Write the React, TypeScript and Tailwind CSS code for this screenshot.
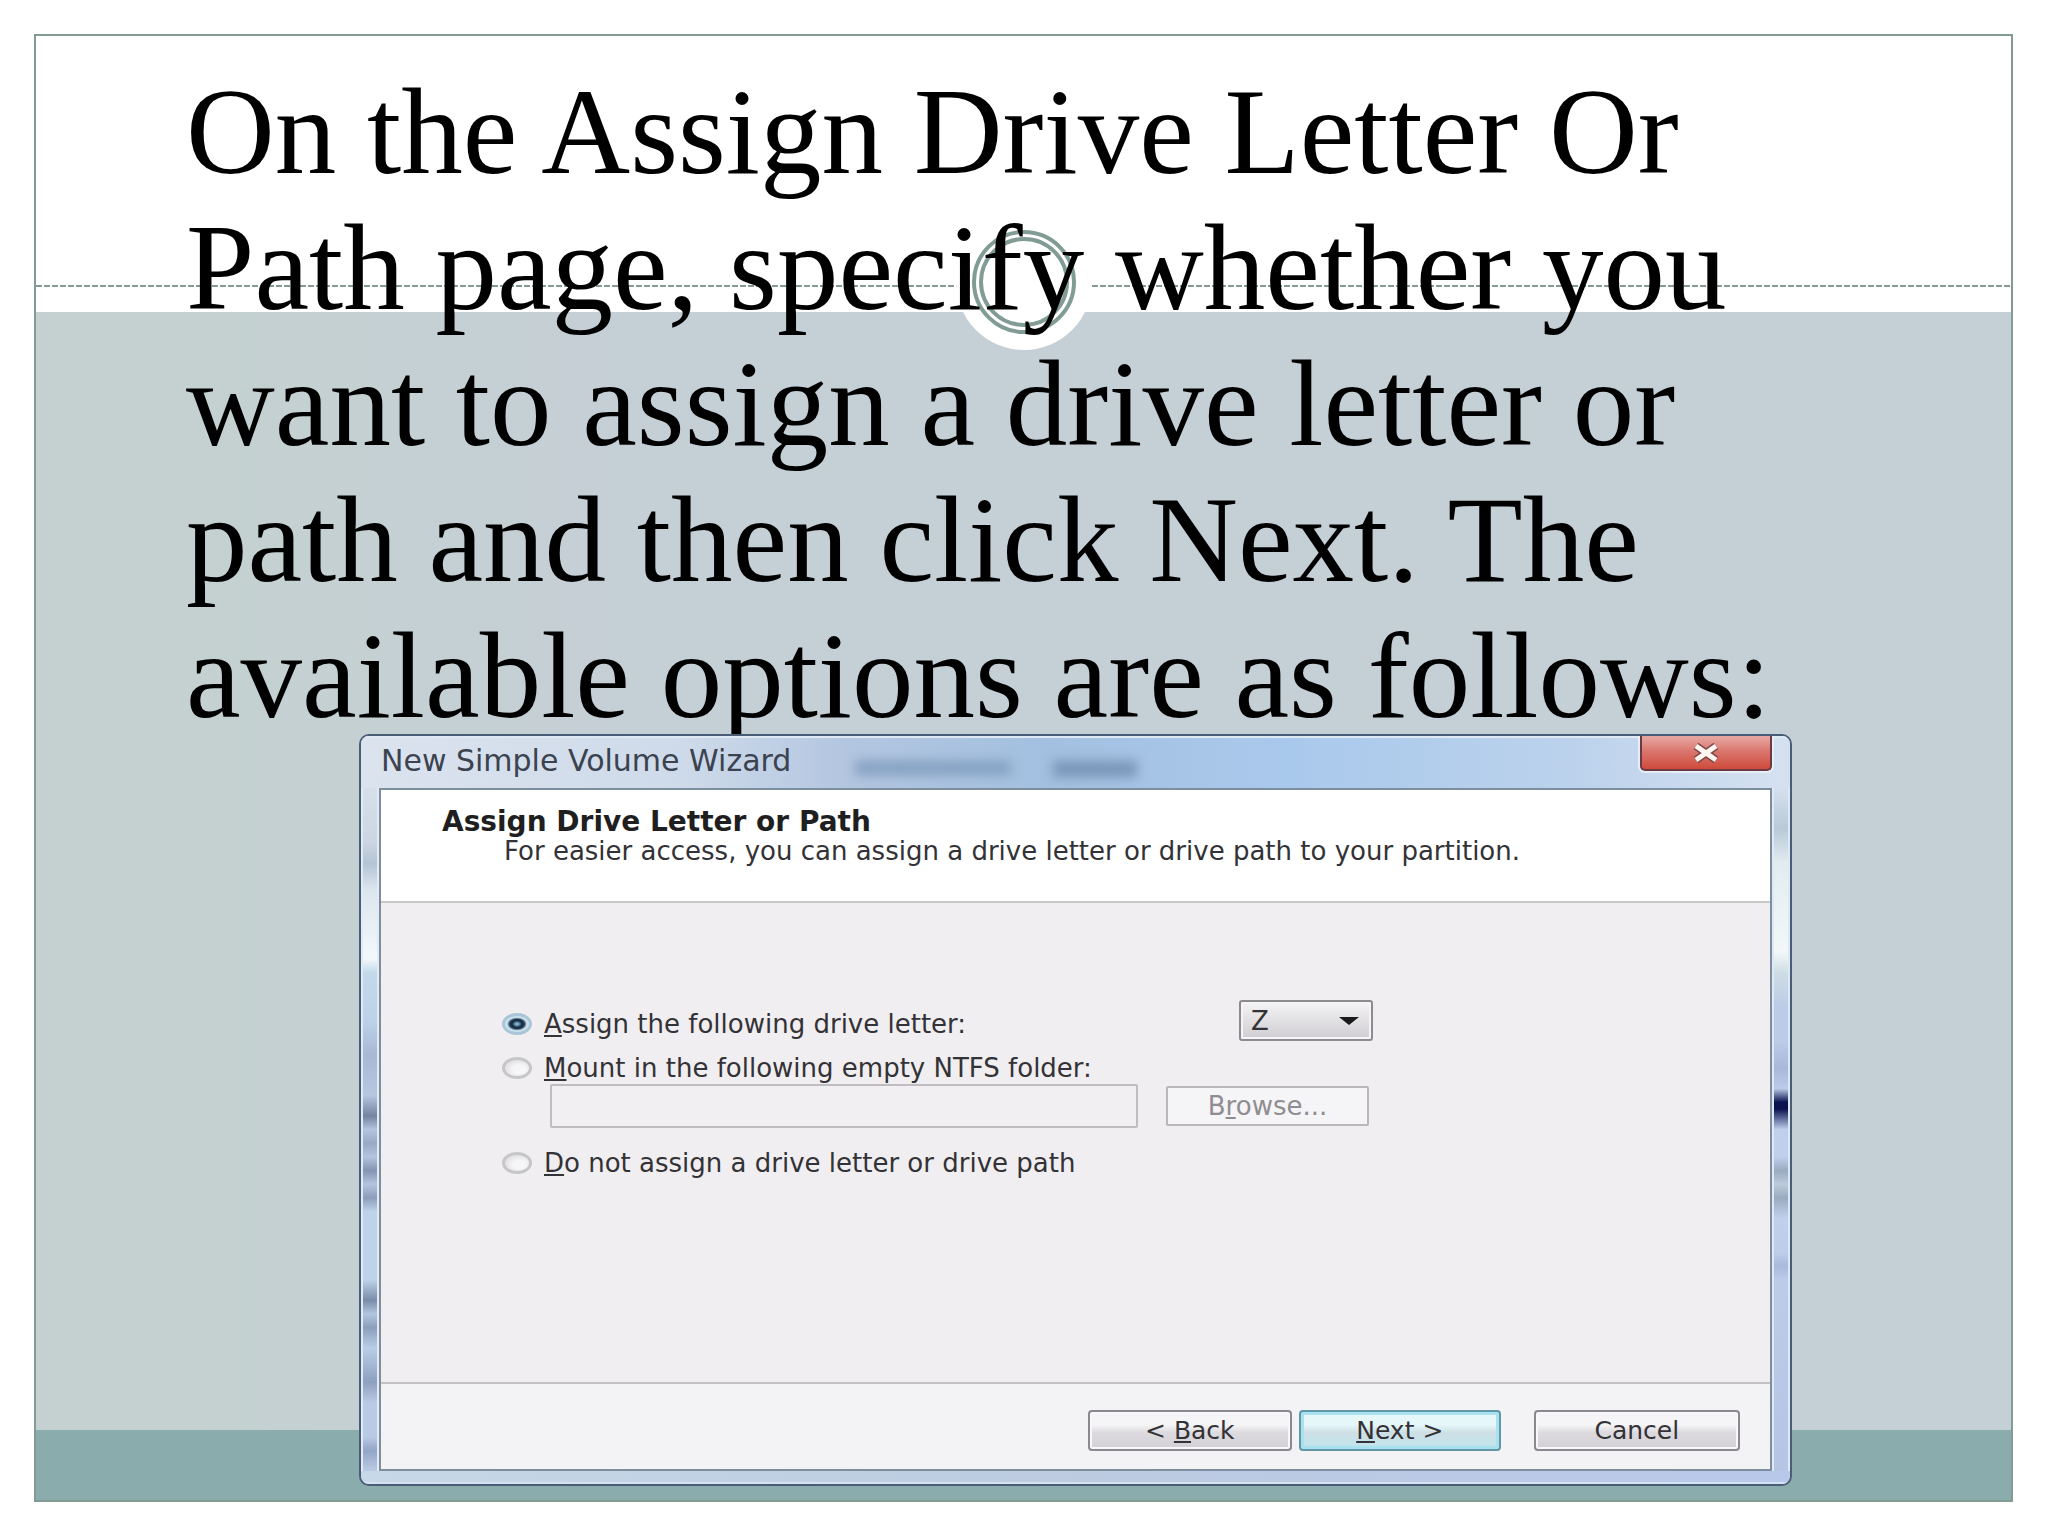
import React from "react";

const headingLines = [
  "On the Assign Drive Letter Or",
  "Path page, specify whether you",
  "want to assign a drive letter or",
  "path and then click Next. The",
  "available options are as follows:",
];

const radioClass =
  "h-[22px] w-[30px] shrink-0 appearance-none rounded-[50%] border-[3px] border-[#c6c5c8] bg-[radial-gradient(ellipse_at_60%_60%,#f6f5f7_30%,#d3d2d5_100%)] checked:border-[#a9c6d8] checked:bg-[radial-gradient(ellipse_at_center,#9fd0e4_0%,#5d8fa8_14%,#16283f_30%,#27405a_44%,#c5dfeb_58%,#dcebf2_100%)]";

const plainButton =
  "h-[41px] rounded-[4px] border-2 border-[#8b8890] bg-linear-to-b from-[#f5f4f6] from-35% via-[#dddbdf] via-55% to-[#d2d0d4] shadow-[inset_0_0_0_2px_#f8f7f9]";

function SlideBackground() {
  return (
    <div className="col-start-1 row-start-1 flex flex-col" aria-hidden="true">
      <div className="relative h-[276px] shrink-0 bg-white">
        <svg className="absolute bottom-[25px] left-0 h-[2px] w-full">
          <line x1="0" y1="1" x2="100%" y2="1" stroke="#84998f" strokeWidth="2" strokeDasharray="6 2" />
        </svg>
        <svg
          className="absolute -bottom-[38px] left-1/2 h-[136px] w-[136px] -translate-x-1/2"
          viewBox="0 0 136 136"
        >
          <circle cx="68" cy="68" r="68" fill="#fff" />
          <circle cx="68" cy="68" r="50" fill="none" stroke="#809c95" strokeWidth="4" />
          <circle cx="68" cy="68" r="43" fill="none" stroke="#809c95" strokeWidth="4" />
        </svg>
      </div>
      <div className="flex-1 bg-linear-to-r from-[#c4d1d0] from-8% via-[#c5cfd6] via-30% to-[#c5cfd6]" />
      <div className="h-[70px] shrink-0 bg-[#8aacac]" />
    </div>
  );
}

function TitleBar() {
  return (
    <div className="relative flex h-[52px] items-start justify-between bg-[linear-gradient(90deg,#dbe3ee_0%,#cfdbea_22%,#b3c6e0_34%,#a3c0e0_48%,#a9c9ec_65%,#bcd2ec_85%,#d5e1f0_100%)] pr-[18px] pl-[20px] shadow-[inset_0_2px_0_#dfe9f3]">
      <div className="flex items-center">
        <h2 className="text-[30px] leading-[50px] whitespace-nowrap text-[#3b4350]">New Simple Volume Wizard</h2>
        <div className="ml-[64px] flex gap-[42px] pt-[16px] blur-[6px]" aria-hidden="true">
          <span className="h-[14px] w-[156px] bg-[#839fc0]" />
          <span className="h-[16px] w-[84px] bg-[#7893b6]" />
        </div>
      </div>
      <button
        type="button"
        aria-label="Close"
        className="flex h-[35px] w-[132px] items-center justify-center rounded-b-[5px] border-2 border-t-0 border-[#6b3a44] bg-linear-to-b from-[#e6a49f] from-5% via-[#d9746c] via-48% to-[#cf4a3a] shadow-[0_0_0_2px_#e8eef6]"
      >
        <svg width="32" height="20" viewBox="0 0 32 20">
          <path d="M6 3 L26 17 M26 3 L6 17" stroke="#7b4a4c" strokeWidth="8" />
          <path d="M6 3 L26 17 M26 3 L6 17" stroke="#fff5f0" strokeWidth="5" />
        </svg>
      </button>
    </div>
  );
}

function WizardBody() {
  return (
    <fieldset
      aria-label="Drive letter options"
      className="flex h-[479px] flex-col bg-[#f0eef1] pt-[97px] pl-[121px] text-[26px]"
    >
      <div className="flex h-[48px] items-center">
        <input id="letter" type="radio" name="mode" defaultChecked className={radioClass} />
        <label htmlFor="letter" className="w-[707px] pl-[12px]">
          <u>A</u>ssign the following drive letter:
        </label>
        <div className="relative self-start">
          <select
            aria-label="Drive letter"
            className="block h-[41px] w-[134px] appearance-none rounded-[3px] border-2 border-[#8d8b90] bg-linear-to-b from-[#f4f3f5] to-[#cfcdd1] pl-[10px] shadow-[inset_0_0_0_2px_#f5f4f6]"
          >
            <option>Z</option>
          </select>
          <svg className="pointer-events-none absolute top-[17px] right-[14px]" width="20" height="8" viewBox="0 0 20 8">
            <path d="M0 0H20L10 8Z" fill="#1a1a1c" />
          </svg>
        </div>
      </div>
      <div className="flex h-[36px] items-center pt-[4px]">
        <input id="mount" type="radio" name="mode" className={radioClass} />
        <label htmlFor="mount" className="pl-[12px]">
          <u>M</u>ount in the following empty NTFS folder:
        </label>
      </div>
      <div className="flex items-center pl-[48px]">
        <input
          type="text"
          disabled
          aria-label="NTFS folder"
          className="h-[44px] w-[588px] rounded-[2px] border-2 border-[#bfbdc1] bg-[#f1eff2]"
        />
        <button
          type="button"
          disabled
          className="ml-[28px] h-[40px] w-[203px] rounded-[2px] border-2 border-[#b9b7bb] bg-[#f5f4f6] text-[#8f8d92]"
        >
          B<u>r</u>owse...
        </button>
      </div>
      <div className="mt-[19px] flex h-[32px] items-center">
        <input id="none" type="radio" name="mode" className={radioClass} />
        <label htmlFor="none" className="pl-[12px]">
          <u>D</u>o not assign a drive letter or drive path
        </label>
      </div>
    </fieldset>
  );
}

function Wizard() {
  return (
    <section className="relative -mt-[10px] mr-[11.1%] ml-[323px] overflow-hidden rounded-[10px] border-2 border-[#4a5d76] bg-[#bccbe3] font-['DejaVu_Sans',sans-serif] text-[25px] leading-[28px] text-[#333236]">
      <TitleBar />
      <div className="flex">
        <div className="w-[18px] shrink-0 border-x-2 border-[#e2ebf5] bg-[linear-gradient(180deg,#d5e0ea_0%,#cbd6e2_8%,#b4c4d4_11%,#dce6ee_15%,#f3f8fb_25%,#c3d9ea_27%,#bdd2e8_34%,#a8b8d4_39%,#b6c8e0_45%,#72849f_48%,#b3c4de_50%,#98a9c6_52%,#b3c4de_54%,#8495b2_56%,#b3c4de_58%,#8c9dba_60%,#bed2e9_62%,#bed2e9_72%,#7a8ca8_75%,#b3c6df_77%,#8c9eba_79%,#bacde6_82%,#8ea0c0_87%,#b9cae4_90%,#b9cae4_95%,#93a5c8_97%,#bccbe3_100%)]" />
        <div className="min-w-0 flex-1 border-2 border-[#7d8f9d]">
          <header className="h-[113px] border-b-2 border-[#c9c7ca] bg-white pt-[17px] pl-[61px]">
            <h3 className="text-[28px] leading-[30px] font-bold text-[#1f1e21]">Assign Drive Letter or Path</h3>
            <p className="pl-[62px] text-[26px] leading-[28px] whitespace-nowrap">
              For easier access, you can assign a drive letter or drive path to your partition.
            </p>
          </header>
          <WizardBody />
          <footer className="flex h-[87px] items-center justify-end border-t-2 border-[#c4c2c6] bg-[#f3f2f4] pt-[8px] pr-[30px]">
            <button type="button" className={plainButton + " w-[204px]"}>
              &lt; <u>B</u>ack
            </button>
            <button
              type="button"
              className="ml-[7px] h-[41px] w-[202px] rounded-[4px] border-2 border-[#5f97a6] bg-linear-to-b from-[#e6f7fa] from-35% via-[#cfe0e6] via-55% to-[#bfe4ec] shadow-[inset_0_0_0_3px_#a9e1ee]"
            >
              <u>N</u>ext &gt;
            </button>
            <button type="button" className={plainButton + " ml-[33px] w-[206px]"}>
              Cancel
            </button>
          </footer>
        </div>
        <div className="w-[18px] shrink-0 border-x-2 border-[#dfe8f6] bg-[linear-gradient(180deg,#d5e0ee_0%,#b9c9d8_6%,#e2ecf0_11%,#f2f8f8_24%,#cfdde4_27%,#bccbe8_32%,#bccbe8_37%,#a9b8d8_41%,#bccbe8_44%,#0c1250_46%,#0c1250_47%,#c0cfec_50%,#c0cfec_54%,#9aaabf_56%,#bccadb_58%,#9aaabf_60%,#c0d0ec_63%,#bdcdea_68%,#a9b9da_70%,#bccbe8_72%,#b7c5e4_100%)]" />
      </div>
      <div className="h-[13px] border-b-2 border-[#d5e2f2] bg-linear-to-r from-[#c7d8e8] via-[#bccbe0] to-[#b8c8ea]" />
    </section>
  );
}

export default function App() {
  return (
    <div className="flex min-h-screen bg-white p-[34px] pr-[35px]">
      <main className="grid flex-1 border-2 border-[#829c94]">
        <SlideBackground />
        <div className="relative z-10 col-start-1 row-start-1 pt-[28px]">
          <h1 className="pl-[150px] font-['Liberation_Serif',serif] text-[123px] leading-[136px] text-black">
            {headingLines.map((line) => (
              <span key={line} className="block whitespace-nowrap">
                {line}
              </span>
            ))}
          </h1>
          <Wizard />
        </div>
      </main>
    </div>
  );
}
